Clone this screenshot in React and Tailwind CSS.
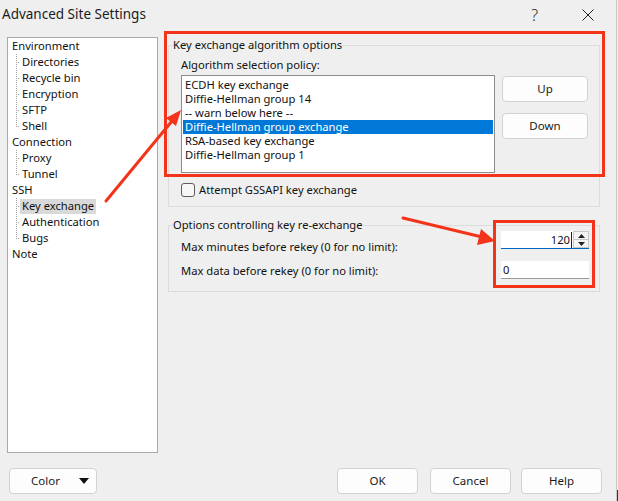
import React from "react";

const tree = [
  { label: "Environment", children: ["Directories", "Recycle bin", "Encryption", "SFTP", "Shell"] },
  { label: "Connection", children: ["Proxy", "Tunnel"] },
  { label: "SSH", children: ["Key exchange", "Authentication", "Bugs"] },
  { label: "Note", children: [] },
];

const algorithms = [
  "ECDH key exchange",
  "Diffie-Hellman group 14",
  "-- warn below here --",
  "Diffie-Hellman group exchange",
  "RSA-based key exchange",
  "Diffie-Hellman group 1",
];

// dotted tree connector, one per child row
function Connector({ last }) {
  return (
    <svg width="4" height="16" className="shrink-0">
      <line x1="0.5" y1="0" x2="0.5" y2={last ? 8 : 16} stroke="#a0a0a0" strokeDasharray="1 1" />
      <line x1="0" y1="8.5" x2="4" y2="8.5" stroke="#a0a0a0" strokeDasharray="1 1" />
    </svg>
  );
}

function WinButton({ children, className = "" }) {
  return (
    <button
      className={`h-[26px] bg-[#fdfdfd] border border-[#d2d2d2] rounded-[4px] text-[11.5px] text-[#1a1a1a] ${className}`}
    >
      {children}
    </button>
  );
}

function App() {
  return (
    <div className="w-[618px] h-[501px] bg-[#efefef] flex overflow-hidden relative font-['Noto_Sans',_sans-serif] text-[11.2px] text-black">
      <div className="w-[616px] flex flex-col">
        {/* Title bar */}
        <div className="h-[29px] flex items-center pl-[2px] pr-[22px]">
          <span className="text-[13.5px] text-[#1c1c1c]">Advanced Site Settings</span>
          <span className="ml-auto text-[16px] font-light text-[#222]">?</span>
          <svg width="12" height="12" className="ml-[44px]">
            <path d="M0.5 0.5 L11.5 11.5 M11.5 0.5 L0.5 11.5" stroke="#222" strokeWidth="1" />
          </svg>
        </div>

        {/* Body */}
        <div className="flex pl-[7px] pt-[8px]">
          {/* Tree */}
          <div className="w-[151px] h-[416px] bg-white border border-[#a9a9a9] leading-[16px] text-[#111]">
            {tree.map((node) => (
              <div key={node.label}>
                <div className="h-[16px] flex items-center pl-[2px]">
                  <span className="px-[2px]">{node.label}</span>
                </div>
                <div className="ml-[8px]">
                  {node.children.map((child, i) => (
                    <div key={child} className="h-[16px] flex items-center">
                      <Connector last={i === node.children.length - 1} />
                      <span
                        className={`px-[2px] h-[15px] flex items-center ${
                          child === "Key exchange" ? "bg-[#d9d9d9]" : ""
                        }`}
                      >
                        {child}
                      </span>
                    </div>
                  ))}
                </div>
              </div>
            ))}
          </div>

          {/* Right column */}
          <div className="ml-[10px] w-[432px] flex flex-col">
            <fieldset className="border border-[#dcdcdc] pl-[12px] pr-[10px] pb-[9px]">
              <legend className="-ml-[8px] leading-[16px] text-[#111]">Key exchange algorithm options</legend>
              <div className="mt-[4px] leading-[16px] text-[#111]">Algorithm selection policy:</div>
              <div className="flex mt-[2px]">
                <div className="w-[314px] h-[98px] bg-white border border-[#8c8c8c] pt-[2px] px-[1px] leading-[14px]">
                  {algorithms.map((a, i) => (
                    <div
                      key={a}
                      className={`h-[14px] pl-[2px] ${i === 3 ? "bg-[#0078d7] text-white" : "text-[#111]"}`}
                    >
                      {a}
                    </div>
                  ))}
                </div>
                <div className="ml-[7px] mt-[1px] flex flex-col gap-[11px]">
                  <WinButton className="w-[86px] h-[25px]">Up</WinButton>
                  <WinButton className="w-[86px] h-[25px]">Down</WinButton>
                </div>
              </div>
              <div className="flex items-center mt-[10px] h-[14px]">
                <span className="w-[14px] h-[14px] rounded-[3px] border border-[#5c5c5c] bg-[#f7f7f7]" />
                <span className="ml-[4px] text-[#111]">Attempt GSSAPI key exchange</span>
              </div>
            </fieldset>

            <fieldset className="mt-[10px] border border-[#dcdcdc] pl-[12px] pr-[10px] pb-[12px]">
              <legend className="-ml-[8px] leading-[16px] text-[#111]">Options controlling key re-exchange</legend>
              <div className="flex -mt-[2px] h-[24px]">
                <span className="mt-[8px] leading-[16px] text-[#111]">Max minutes before rekey (0 for no limit):</span>
                <div className="ml-auto w-[88px] h-[18px] bg-white border-b border-[#0067c0] flex">
                  <span className="flex-1 text-right pr-[1px] leading-[18px] text-[#111]">120</span>
                  <span className="w-[1px] h-[16px] mt-[1px] bg-[#222]" />
                  <div className="ml-[1px] w-[16px] flex flex-col border border-[#c8c8c8] bg-[#f4f4f4]">
                    <div className="flex-1 flex items-center justify-center border-b border-[#c8c8c8]">
                      <svg width="7" height="4"><path d="M0 4 L3.5 0 L7 4 Z" fill="#222" /></svg>
                    </div>
                    <div className="flex-1 flex items-center justify-center">
                      <svg width="7" height="4"><path d="M0 0 L3.5 4 L7 0 Z" fill="#222" /></svg>
                    </div>
                  </div>
                </div>
              </div>
              <div className="flex h-[24px]">
                <span className="mt-[8px] leading-[16px] text-[#111]">Max data before rekey (0 for no limit):</span>
                <div className="ml-auto mt-[6px] w-[88px] h-[18px] bg-white border-b border-[#9a9a9a] pl-[2px] leading-[18px] text-[#111]">
                  0
                </div>
              </div>
            </fieldset>
          </div>
        </div>

        {/* Footer */}
        <div className="mt-[15px] flex pl-[9px] pr-[14px]">
          <WinButton className="w-[88px] flex items-center pl-[21px] pr-[7px]">
            <span>Color</span>
            <svg width="10" height="6" className="ml-auto"><path d="M0 0 L10 0 L5 6 Z" fill="#111" /></svg>
          </WinButton>
          <WinButton className="ml-auto w-[81px] border-[#5b9bd5]">OK</WinButton>
          <WinButton className="ml-[12px] w-[81px]">Cancel</WinButton>
          <WinButton className="ml-[10px] w-[81px]">Help</WinButton>
        </div>
      </div>

      {/* neighbouring window edge */}
      <div className="w-[2px] border-l border-[#c9c9c9] flex flex-col justify-end">
        <div className="h-[11px] bg-[#333]" />
      </div>

      {/* red annotations drawn over the dialog */}
      <svg width="618" height="501" className="absolute inset-0 pointer-events-none">
        <rect x="165.5" y="32.5" width="438" height="143" fill="none" stroke="#f3341b" strokeWidth="3" />
        <rect x="494.5" y="221.5" width="99" height="65" fill="none" stroke="#f3341b" strokeWidth="3" />
        <line x1="106" y1="201" x2="172" y2="121" stroke="#f3341b" strokeWidth="3" strokeLinecap="round" />
        <path d="M181 110 L166 118 L176 126 Z" fill="#f3341b" />
        <line x1="403" y1="218" x2="482" y2="237" stroke="#f3341b" strokeWidth="3" strokeLinecap="round" />
        <path d="M495 241 L477 245 L481 229 Z" fill="#f3341b" />
      </svg>
    </div>
  );
}

export default App;
